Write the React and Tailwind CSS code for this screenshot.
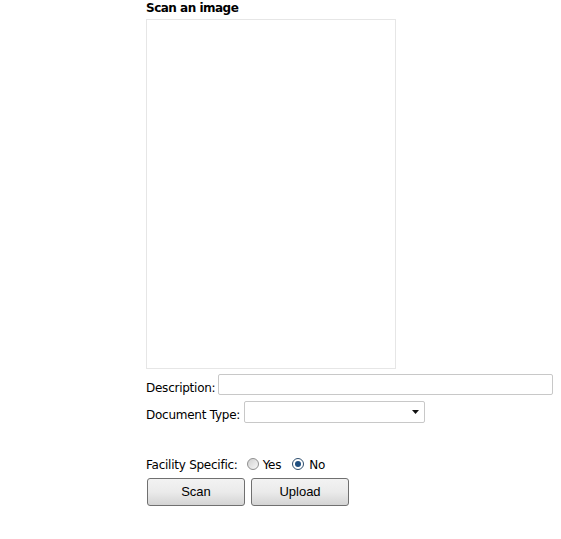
export default function App() {
  return (
    <div className="min-h-screen bg-white text-black">
      <div className="ml-[146px] font-['DejaVu_Sans',sans-serif] text-[12px] leading-[14px] tracking-[-0.25px]">
        <h2 className="font-bold text-[12px] leading-[16px] h-[18px] tracking-[-0.5px]">Scan an image</h2>
        <div className="mt-[1px] w-[250px] h-[350px] border border-[#e6e6e6] bg-white"></div>

        <div className="mt-[5px] flex items-start h-[21px]">
          <label className="pt-[7px] mr-[3px]">Description:</label>
          <input type="text" className="w-[335px] h-[21px] border border-[#c8c8c8] rounded-[2px] outline-none" />
        </div>

        <div className="mt-[6px] flex items-start h-[22px]">
          <label className="pt-[7px] mr-[4px]">Document Type:</label>
          <div className="w-[181px] h-[22px] border border-[#c8c8c8] rounded-[2px] flex items-center justify-end pr-[5px]">
            <svg width="7" height="4" viewBox="0 0 7 4"><path d="M0 0h7L3.5 4z" fill="#111" /></svg>
          </div>
        </div>

        <div className="mt-[32px] flex items-start h-[16px]">
          <span className="pt-[3px]">Facility Specific:</span>
          <span className="mt-[3px] ml-[9px] w-[12px] h-[12px] rounded-full border border-[#8f8f8f] bg-gradient-to-br from-[#d0d0d0] to-[#f8f8f8]"></span>
          <span className="pt-[3px] ml-[4px]">Yes</span>
          <span className="mt-[3px] ml-[11px] w-[12px] h-[12px] rounded-full border border-[#2d4d6d] bg-white flex items-center justify-center">
            <span className="w-[6px] h-[6px] rounded-full bg-[#1f4f80]"></span>
          </span>
          <span className="pt-[3px] ml-[5px]">No</span>
        </div>

        <div className="mt-[7px] flex gap-[6px] ml-[1px] font-['Liberation_Sans',sans-serif] text-[13px] tracking-normal">
          <button className="w-[98px] h-[28px] border border-[#707070] rounded-[3px] bg-gradient-to-b from-[#f2f2f2] via-[#ebebeb] to-[#d4d4d4]">Scan</button>
          <button className="w-[98px] h-[28px] border border-[#707070] rounded-[3px] bg-gradient-to-b from-[#f2f2f2] via-[#ebebeb] to-[#d4d4d4]">Upload</button>
        </div>
      </div>
    </div>
  );
}
